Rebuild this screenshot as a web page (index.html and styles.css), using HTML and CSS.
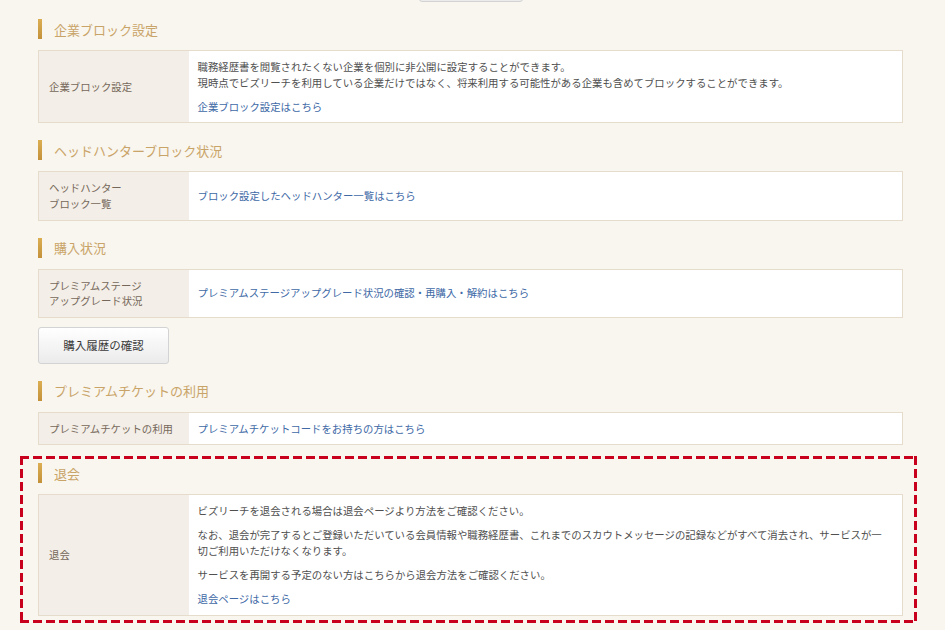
FILE: index.html
```html
<!DOCTYPE html>
<html lang="ja">
<head>
    <meta charset="UTF-8">
    <meta name="viewport" content="width=device-width, initial-scale=1.0">
    <title>設定</title>
    <link rel="stylesheet" href="styles.css">
</head>
<body>
    <div class="page">
        <!-- 前セクションのボタン（スクロールで下端のみ見えている） -->
        <a href="##" class="btn btn-prev"></a>

        <div class="block">
            <h2 class="block-title">企業ブロック設定</h2>
            <table class="info-table">
                <tr>
                    <th>企業ブロック設定</th>
                    <td>
                        <p>職務経歴書を閲覧されたくない企業を個別に非公開に設定することができます。<br>現時点でビズリーチを利用している企業だけではなく、将来利用する可能性がある企業も含めてブロックすることができます。</p>
                        <p><a href="##" class="link">企業ブロック設定はこちら</a></p>
                    </td>
                </tr>
            </table>
        </div>

        <div class="block">
            <h2 class="block-title">ヘッドハンターブロック状況</h2>
            <table class="info-table">
                <tr>
                    <th>ヘッドハンター<br>ブロック一覧</th>
                    <td><a href="##" class="link">ブロック設定したヘッドハンター一覧はこちら</a></td>
                </tr>
            </table>
        </div>

        <div class="block">
            <h2 class="block-title">購入状況</h2>
            <table class="info-table">
                <tr>
                    <th>プレミアムステージ<br>アップグレード状況</th>
                    <td><a href="##" class="link">プレミアムステージアップグレード状況の確認・再購入・解約はこちら</a></td>
                </tr>
            </table>
            <a href="##" class="btn btn-history">購入履歴の確認</a>
        </div>

        <div class="block">
            <h2 class="block-title">プレミアムチケットの利用</h2>
            <table class="info-table">
                <tr>
                    <th>プレミアムチケットの利用</th>
                    <td><a href="##" class="link">プレミアムチケットコードをお持ちの方はこちら</a></td>
                </tr>
            </table>
        </div>

        <!-- 退会（赤い点線で囲む） -->
        <div class="block block-marked">
            <h2 class="block-title">退会</h2>
            <table class="info-table">
                <tr>
                    <th>退会</th>
                    <td>
                        <p>ビズリーチを退会される場合は退会ページより方法をご確認ください。</p>
                        <p>なお、退会が完了するとご登録いただいている会員情報や職務経歴書、これまでのスカウトメッセージの記録などがすべて消去され、サービスが一切ご利用いただけなくなります。</p>
                        <p>サービスを再開する予定のない方はこちらから退会方法をご確認ください。</p>
                        <p><a href="##" class="link">退会ページはこちら</a></p>
                    </td>
                </tr>
            </table>
        </div>
    </div>
</body>
</html>
```

FILE: styles.css
```css
*{
    padding: 0;
    margin: 0;
    box-sizing: border-box;
}

body{
    background-color: #f9f6ef;
    font-family: "Noto Sans CJK JP", "Noto Sans", sans-serif;
    font-size: 10.4px;
    color: #505050;
}

a{
    text-decoration: none;
}

.page{
    width: 865px;
    margin-left: 38px;
    display: flex;
    flex-direction: column;
}

/* ==================ボタン===================== */
.btn{
    display: flex;
    align-items: center;
    justify-content: center;
    background: linear-gradient(#fff, #ebebeb);
    border: 1px solid #d3d3d3;
    border-radius: 3px;
    color: #3a3a3a;
}

.btn-prev{
    width: 104px;
    height: 30px;
    margin: -28px auto 0;
}

.btn-history{
    width: 131px;
    height: 37px;
    margin-top: 9px;
    font-size: 11.5px;
}

/* ==================見出し===================== */
.block{
    margin-top: 17px;
}

.block-title{
    display: flex;
    align-items: center;
    gap: 12px;
    height: 20px;
    margin-bottom: 11px;
    font-size: 13px;
    font-weight: normal;
    color: #c9a468;
}

.block-title::before{
    content: '';
    width: 4px;
    height: 20px;
    background: linear-gradient(#dcae52, #c3913a);
}

/* ==================テーブル===================== */
.info-table{
    width: 100%;
    border-collapse: collapse;
    border: 1px solid #e6dccc;
    line-height: 1.5;
}

.info-table th{
    width: 150px;
    padding: 8px 10px;
    background-color: #f3eee7;
    color: #75685a;
    font-weight: normal;
    text-align: left;
    vertical-align: middle;
}

.info-table td{
    padding: 8px 12px 8px 9px;
    background-color: #fff;
}

.info-table td p + p{
    margin-top: 8.5px;
}

.link{
    color: #4069a6;
}

/* ==================赤点線の囲み===================== */
.block-marked{
    margin: 11px -14px 0 -18px;
    padding: 7px 14px 7px 18px;
    background:
        repeating-linear-gradient(90deg, #c8001e 0 9px, transparent 9px 13px) top left / 100% 3px no-repeat,
        repeating-linear-gradient(90deg, #c8001e 0 9px, transparent 9px 13px) bottom left / 100% 3px no-repeat,
        repeating-linear-gradient(180deg, #c8001e 0 9px, transparent 9px 13px) top left / 3px 100% no-repeat,
        repeating-linear-gradient(180deg, #c8001e 0 9px, transparent 9px 13px) top right / 3px 100% no-repeat;
}
```
